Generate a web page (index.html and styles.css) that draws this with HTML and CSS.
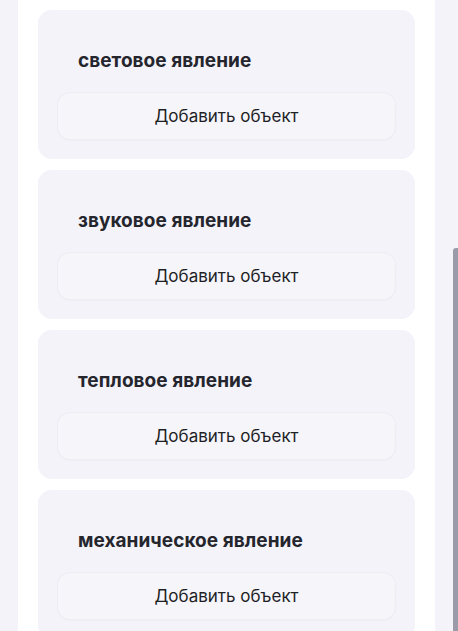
FILE: index.html
```html
<!DOCTYPE html>
<html lang="ru">
<head>
<meta charset="utf-8">
<link rel="stylesheet" href="styles.css">
</head>
<body>
<div class="screen">
  <main class="panel">
    <section class="card">
      <h2 class="card-title">световое явление</h2>
      <button class="add-btn">Добавить объект</button>
    </section>
    <section class="card">
      <h2 class="card-title">звуковое явление</h2>
      <button class="add-btn">Добавить объект</button>
    </section>
    <section class="card">
      <h2 class="card-title">тепловое явление</h2>
      <button class="add-btn">Добавить объект</button>
    </section>
    <section class="card">
      <h2 class="card-title">механическое явление</h2>
      <button class="add-btn">Добавить объект</button>
    </section>
  </main>
  <div class="scrollbar"><div class="thumb"></div></div>
</div>
</body>
</html>
```
FILE: styles.css
```css
html, body {
  margin: 0;
  padding: 0;
  height: 100%;
  overflow: hidden;
}
body {
  background: #f3f3f9;
  font-family: Inter, "Noto Sans", sans-serif;
  color: #26262f;
}
.screen {
  display: flex;
  height: 631px;
  padding-left: 18px;
  box-sizing: border-box;
}
.panel {
  width: 417px;
  background: #ffffff;
  padding: 10px 20px 0 20px;
  box-sizing: border-box;
  display: flex;
  flex-direction: column;
  gap: 11px;
}
.card {
  flex: none;
  height: 149px;
  background: #f3f3f9;
  border-radius: 14px;
  padding: 0 20px;
  box-sizing: border-box;
  display: flex;
  flex-direction: column;
}
.card-title {
  margin: 39px 0 0 20px;
  font-size: 19px;
  line-height: 24px;
  font-weight: 700;
  color: #25252e;
  letter-spacing: 0.05px;
}
.add-btn {
  margin-top: 20px;
  height: 46px;
  border: none;
  border-radius: 12px;
  background: #f5f5fa;
  box-shadow: 0 0 0 1px #ededf3, 0 1px 2px rgba(210, 210, 222, 0.25);
  font-family: Inter, "Noto Sans", sans-serif;
  font-size: 17px;
  color: #1f1f26;
  padding: 0;
}
.scrollbar {
  flex: 1;
  display: flex;
  justify-content: flex-end;
  padding-top: 248px;
}
.thumb {
  width: 5px;
  background: #9b9baa;
  border-radius: 3px 0 0 0;
}
```
